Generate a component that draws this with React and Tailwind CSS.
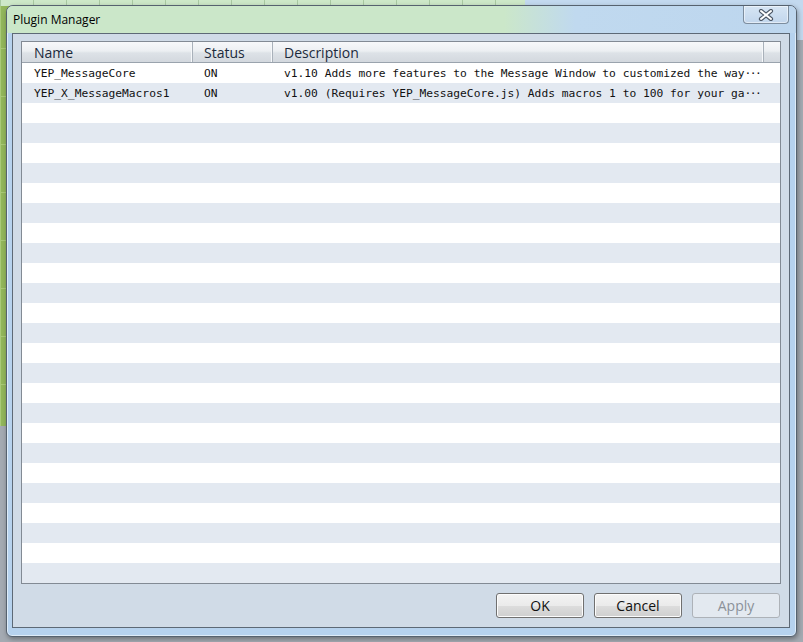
import React from 'react';

const plugins = [
    {
        name: 'YEP_MessageCore',
        status: 'ON',
        description: 'v1.10 Adds more features to the Message Window to customized the way',
    },
    {
        name: 'YEP_X_MessageMacros1',
        status: 'ON',
        description: 'v1.00 (Requires YEP_MessageCore.js) Adds macros 1 to 100 for your ga',
    },
];

const ROW_COUNT = 26;

const uiFont = { fontFamily: '"Open Sans", "Noto Sans", sans-serif' };
const monoFont = { fontFamily: '"DejaVu Sans Mono", "Liberation Mono", monospace' };

const HeaderCell = ({ label, className }) => (
    <div
        className={`h-full flex items-center pt-[1px] border-r border-[#a9b1ba] shadow-[inset_-1px_0_0_#f6f8fa] text-[14px] text-[#1c2a3c] ${className}`}
        style={uiFont}
    >
        {label}
    </div>
);

const DialogButton = ({ label, disabled }) => (
    <button
        disabled={disabled}
        className={
            disabled
                ? 'w-[88px] h-[25px] rounded-[3px] border border-[#adb2b8] bg-[#e3e9f0] text-[14px] text-[#8b9199]'
                : 'w-[88px] h-[25px] rounded-[3px] border border-[#707070] bg-[linear-gradient(to_bottom,#f3f3f3_0%,#ebebeb_50%,#dddddd_51%,#cfcfcf_100%)] shadow-[inset_0_0_0_1px_#fcfcfc] text-[14px] text-[#111]'
        }
        style={uiFont}
    >
        {label}
    </button>
);

const CloseGlyph = () => (
    <svg width="16" height="12" viewBox="0 0 16 12">
        <path d="M3 2 L13 10 M13 2 L3 10" stroke="#4d5866" strokeWidth="4.2" strokeLinecap="round" />
        <path d="M3 2 L13 10 M13 2 L3 10" stroke="#ffffff" strokeWidth="2" strokeLinecap="round" />
    </svg>
);

export default function App() {
    return (
        <div className="relative w-[803px] h-[642px] overflow-hidden bg-[#a4aab2]">
            {/* map editor peeking out behind the dialog */}
            <div className="absolute left-0 top-0 w-[525px] h-[426px] bg-[#92b75c] bg-[linear-gradient(to_right,#a9ca78_1px,transparent_1px),linear-gradient(to_bottom,#a9ca78_1px,transparent_1px)] bg-[size:48px_48px]" />
            <div className="absolute left-0 top-0 w-[525px] h-[6px] bg-[#cde8c8] bg-[linear-gradient(to_right,#a9c9a2_1px,transparent_1px)] bg-[size:33px_6px]" />
            <div className="absolute left-[525px] top-0 right-0 h-[40px] bg-[#c3d9ef]" />

            <div className="relative pl-[6px] pt-[5px]">
                <div className="relative w-[791px] h-[632px] flex flex-col rounded-t-[7px] rounded-b-[6px] border border-[#56626f] bg-[#b6d2ee] shadow-[inset_0_0_0_1px_rgba(255,255,255,0.55),1px_2px_5px_rgba(0,0,0,0.35)]">
                    {/* title bar */}
                    <div className="h-[27px] shrink-0 flex items-center pl-[6px] rounded-t-[6px] bg-[linear-gradient(to_right,#cbe7c9_0%,#cbe7c9_63%,#c0d9ef_72%,#bdd6ee_100%)]">
                        <span className="text-[12px] text-black pt-[1px]" style={uiFont}>
                            Plugin Manager
                        </span>
                    </div>
                    <div className="absolute right-[7px] top-0 w-[46px] h-[18px] flex items-center justify-center rounded-b-[4px] border border-t-0 border-[#7d8d9e] bg-[linear-gradient(to_bottom,#d6e5f4,#c2d6ec)] shadow-[inset_0_0_0_1px_rgba(255,255,255,0.5)]">
                        <CloseGlyph />
                    </div>

                    {/* client area */}
                    <div className="flex-1 ml-[5px] mr-[6px] mb-[8px] border border-[#5d6976] bg-[#d0dbe7] flex flex-col pt-[7px] px-[8px] pb-[9px]">
                        <div className="flex flex-col border border-[#828a94] bg-white">
                            <div className="h-[21px] flex border-b border-[#9aa3ad] bg-[linear-gradient(to_bottom,#f7f8fa_0%,#eceff2_45%,#dde2e7_55%,#d3d8de_100%)]">
                                <HeaderCell label="Name" className="w-[171px] pl-[12px]" />
                                <HeaderCell label="Status" className="w-[80px] pl-[11px]" />
                                <HeaderCell label="Description" className="w-[491px] pl-[11px]" />
                                <div className="flex-1" />
                            </div>
                            {Array.from({ length: ROW_COUNT }).map((_, i) => {
                                const p = plugins[i];
                                return (
                                    <div
                                        key={i}
                                        className={`h-[20px] flex items-center pt-[2px] text-[11.25px] text-[#111] ${i % 2 === 0 ? 'bg-white' : 'bg-[#e3e9f1]'}`}
                                        style={monoFont}
                                    >
                                        {p && (
                                            <>
                                                <div className="w-[171px] pl-[12px] whitespace-nowrap overflow-hidden">{p.name}</div>
                                                <div className="w-[80px] pl-[11px]">{p.status}</div>
                                                <div className="w-[491px] pl-[11px] whitespace-nowrap overflow-hidden">
                                                    {p.description}
                                                    <span className="tracking-[-1.5px]">···</span>
                                                </div>
                                            </>
                                        )}
                                    </div>
                                );
                            })}
                        </div>

                        <div className="flex justify-end gap-[10px] mt-[9px] pr-[1px]">
                            <DialogButton label="OK" />
                            <DialogButton label="Cancel" />
                            <DialogButton label="Apply" disabled />
                        </div>
                    </div>
                </div>
            </div>
        </div>
    );
}
